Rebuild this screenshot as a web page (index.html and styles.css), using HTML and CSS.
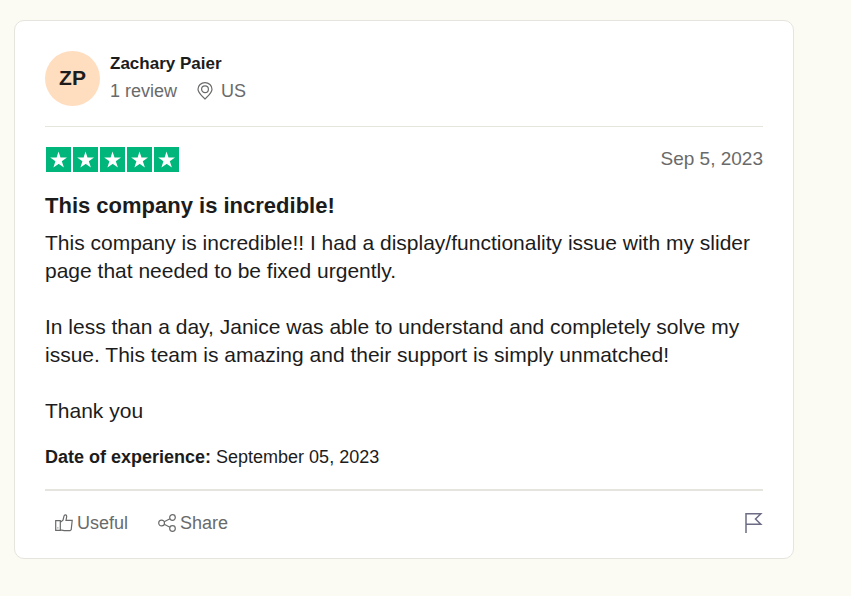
FILE: index.html
```html
<!DOCTYPE html>
<html lang="en">
<head>
<meta charset="utf-8">
<meta name="viewport" content="width=device-width, initial-scale=1">
<title>Customer review</title>
<link rel="stylesheet" href="styles.css">
</head>
<body>
<article class="card">
  <header class="consumer">
    <span class="avatar">ZP</span>
    <div class="consumer-info">
      <a class="name" href="#">Zachary Paier</a>
      <div class="meta">
        <span>1 review</span>
        <span class="location">
          <svg class="pin" viewBox="0 0 16 18" aria-hidden="true"><path d="M8 17C5.600 14.500 1 10.900 1 7.200a7 6.600 0 0 1 14 0c0 3.700-4.600 7.300-7 9.800z"/><circle cx="8" cy="7.200" r="3.400"/></svg>
          US
        </span>
      </div>
    </div>
  </header>
  <section class="review">
    <div class="rating">
      <div class="stars" role="img" aria-label="Rated 5 out of 5 stars">
        <svg viewBox="0 0 25 25"><use href="#star"/></svg>
        <svg viewBox="0 0 25 25"><use href="#star"/></svg>
        <svg viewBox="0 0 25 25"><use href="#star"/></svg>
        <svg viewBox="0 0 25 25"><use href="#star"/></svg>
        <svg viewBox="0 0 25 25"><use href="#star"/></svg>
      </div>
      <time class="date" datetime="2023-09-05">Sep 5, 2023</time>
    </div>
    <h2 class="title">This company is incredible!</h2>
    <p class="text">This company is incredible!! I had a display/functionality issue with my slider page that needed to be fixed urgently.<br><br>In less than a day, Janice was able to understand and completely solve my issue. This team is amazing and their support is simply unmatched!<br><br>Thank you</p>
    <p class="experience"><b>Date of experience:</b> September 05, 2023</p>
  </section>
  <footer class="actions">
    <button class="action" type="button">
      <svg class="icon" viewBox="0 0 18 18" aria-hidden="true"><path d="M.7 6.700h4.600v9.700H.7zM5.300 8.200L8 6.200 9 2.100C9.300.500 11.700.500 11.700 2.500L11 6.400h6.200l-1 9.400-1.200.9H9.200l-3.900-.9M2.500 13.800h.8"/></svg>
      Useful
    </button>
    <button class="action" type="button">
      <svg class="icon" viewBox="0 0 18 18" aria-hidden="true"><circle cx="3.600" cy="9" r="2.900"/><circle cx="14.500" cy="3.500" r="2.800"/><circle cx="14.500" cy="14.500" r="2.800"/><path d="M6.200 7.700L12 4.800M6.200 10.300L12 13.200"/></svg>
      Share
    </button>
    <button class="action flag" type="button" aria-label="Report review">
      <svg viewBox="0 0 18 20" aria-hidden="true"><path d="M1 20V.8H15.800L10.500 6l5.300 5.300H1"/></svg>
    </button>
  </footer>
</article>
<svg class="defs" aria-hidden="true">
  <symbol id="star" viewBox="0 0 25 25"><path fill="#00b67a" d="M0 0h25v25H0z"/><path fill="#fff" d="M12.500 4.500l2 6h6.500l-5.200 3.800.7 2L12.500 17l-5.100 3.600 2-6.300L4.200 10.500h6.400zM16.500 16.300l1.400 4.300-5-3.500z"/></symbol>
</svg>
</body>
</html>
```
FILE: styles.css
```css
* {
  box-sizing: border-box;
}

body {
  margin: 0;
  padding: 20px 57px 36px 14px;
  background: #fcfbf3;
  color: #1c1c1c;
  font-family: "Liberation Sans", Arial, sans-serif;
  font-size: 18px;
  line-height: 24px;
}

.card {
  padding: 30px 30px 23px;
  background: #fff;
  border: 1px solid #e5e5dd;
  border-radius: 10px;
}

.consumer {
  display: flex;
  align-items: center;
  gap: 10px;
  padding-bottom: 20px;
  border-bottom: 1px solid #e5e5dd;
}

.avatar {
  display: flex;
  align-items: center;
  justify-content: center;
  width: 55px;
  height: 55px;
  padding-bottom: 2px;
  border-radius: 50%;
  background: #ffddbf;
  font-size: 21px;
  font-weight: 700;
}

.consumer-info {
  display: flex;
  flex-direction: column;
  gap: 3px;
  padding-bottom: 2px;
}

.name {
  color: inherit;
  font-size: 17px;
  font-weight: 700;
  text-decoration: none;
}

.meta,
.location {
  display: flex;
  align-items: center;
}

.meta {
  gap: 20px;
  color: #696a6a;
}

.location {
  gap: 8px;
}

.pin {
  width: 16px;
  height: 18px;
}

.pin,
.action svg {
  fill: none;
  stroke: currentColor;
  stroke-width: 1.2;
}

.review {
  padding: 20px 0;
}

.rating {
  display: flex;
  align-items: flex-start;
  justify-content: space-between;
  color: #696a6a;
}

.date {
  font-size: 19px;
}

.stars {
  display: flex;
  gap: 2px;
  padding-left: 1px;
}

.stars svg {
  width: 25px;
  height: 25px;
}

.title {
  margin: 20px 0 9px;
  font-size: 22px;
  line-height: 28px;
}

.text {
  margin: 0 0 20px;
  font-size: 21px;
  line-height: 28px;
}

.experience {
  margin: 0;
}

.actions {
  display: flex;
  align-items: center;
  gap: 30px;
  padding: 20px 0 0 10px;
  border-top: 2px solid #e5e5dd;
}

.action {
  display: flex;
  align-items: center;
  gap: 4px;
  padding: 0;
  border: 0;
  background: none;
  color: #696a6a;
  font: inherit;
  cursor: pointer;
}

.icon {
  width: 18px;
  height: 18px;
}

.flag {
  margin-left: auto;
  color: #6c6c85;
}

.flag svg {
  width: 18px;
  height: 20px;
  stroke-width: 1.5;
}

.defs {
  position: absolute;
  width: 0;
  height: 0;
}
```
